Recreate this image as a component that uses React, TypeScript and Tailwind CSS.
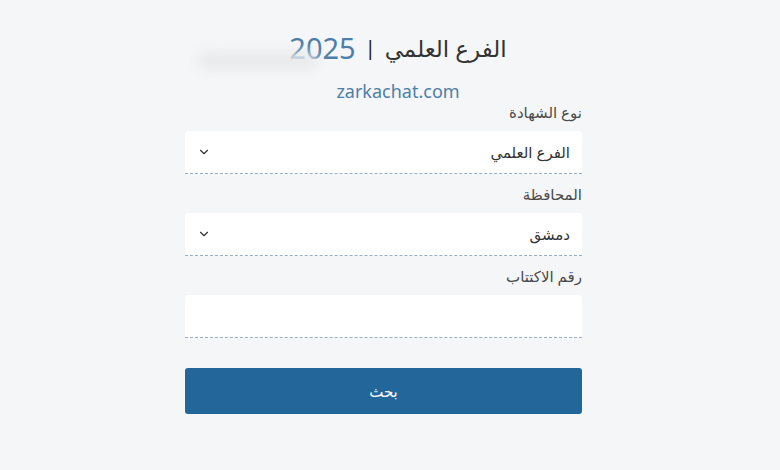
import { ChevronDown } from 'lucide-react'

const FIELDS = [
  { label: 'نوع الشهادة', value: 'الفرع العلمي', select: true },
  { label: 'المحافظة', value: 'دمشق', select: true },
  { label: 'رقم الاكتتاب', value: '', select: false },
]

const Field = ({ label, value, select }: { label: string; value: string; select: boolean }) => (
  <div className="flex flex-col">
    <label className="h-[19px] text-right text-[15px] leading-[19px] text-[#4a4a4a]">{label}</label>
    <div className="mt-[9px] flex h-[43px] items-center justify-between rounded-t-[3px] border-b border-dashed border-[#98aec2] bg-white pl-[12px] pr-[12px]">
      <span className="text-[15px] text-[#333]">{value}</span>
      {select && <ChevronDown className="h-[14px] w-[14px] text-[#333]" strokeWidth={2} />}
    </div>
  </div>
)

export default function App() {
  return (
    <div
      className="flex h-[470px] w-[780px] flex-col bg-[#f5f6f7]"
      style={{ fontFamily: '"Noto Sans", "DejaVu Sans", sans-serif' }}
    >
      {/* header */}
      <div className="relative flex flex-col items-center pl-[16px] pt-[28px]">
        <div className="absolute left-[198px] top-[53px] h-[16px] w-[120px] rounded-full bg-[#e8e9ea] blur-[6px]" />
        <div className="flex h-[40px] items-center gap-[9px]">
          <span className="text-[29px] text-[#4d7ea8]">2025</span>
          <span className="text-[20px] text-[#222]">|</span>
          <span dir="rtl" className="text-[23px] text-[#333]">الفرع العلمي</span>
        </div>
        <div className="mt-[11px] text-[18px] leading-[24px] text-[#4d7ea8]">zarkachat.com</div>
      </div>

      {/* form */}
      <div dir="rtl" className="ml-[185px] flex w-[397px] flex-col gap-[11px]">
        {FIELDS.map((f) => (
          <Field key={f.label} {...f} />
        ))}
        <button className="mt-[19px] h-[46px] rounded-[3px] bg-[#236699] text-[15px] text-white">بحث</button>
      </div>
    </div>
  )
}
